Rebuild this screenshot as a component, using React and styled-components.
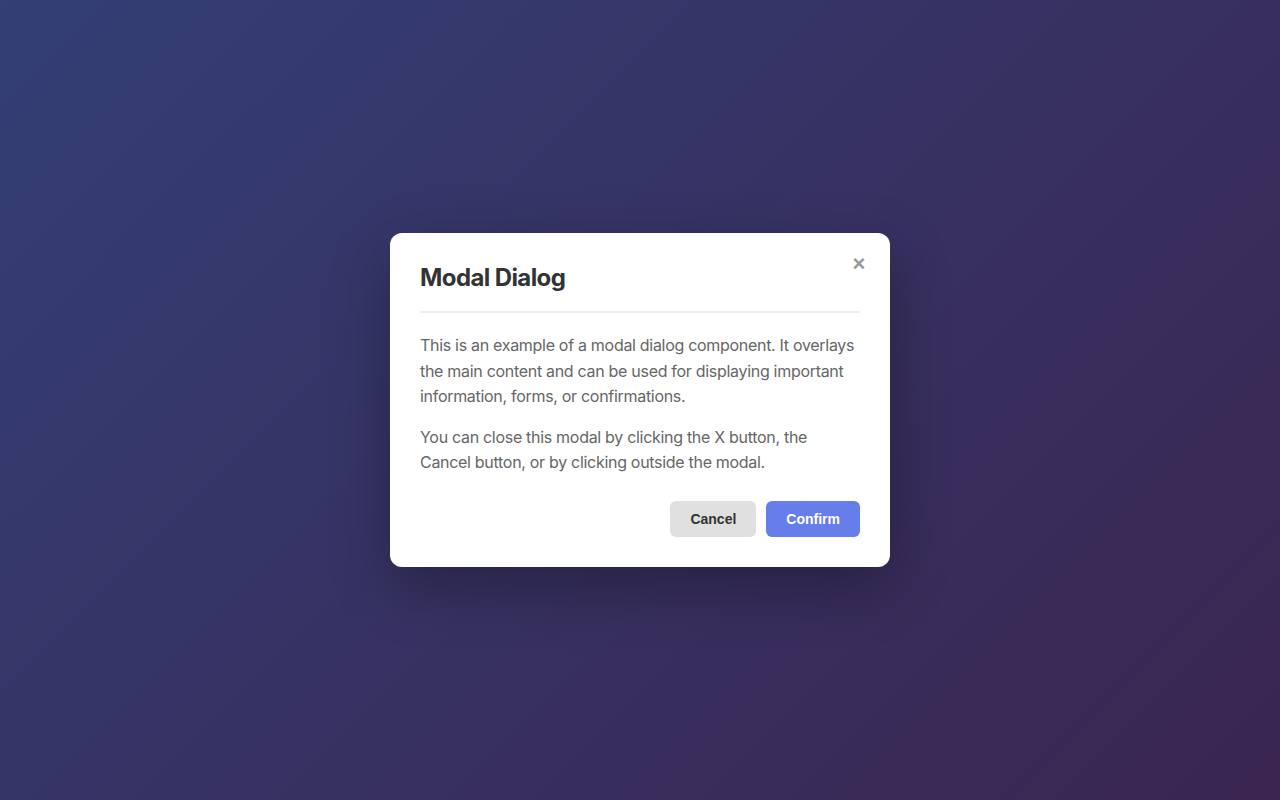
import styled, { createGlobalStyle } from "styled-components";

const GlobalStyle = createGlobalStyle`
  html, body {
    margin: 0;
    padding: 0;
  }
  body {
    font-family: Inter, "Noto Sans", sans-serif;
  }
`;

const Backdrop = styled.div`
  position: relative;
  width: 100vw;
  height: 100vh;
  background: linear-gradient(135deg, #667eea 0%, #764ba2 100%);
  display: flex;
  align-items: center;
  justify-content: center;
  &::before {
    content: "";
    position: absolute;
    inset: 0;
    background: rgba(0, 0, 0, 0.5);
  }
`;

const Modal = styled.div`
  position: relative;
  width: 500px;
  box-sizing: border-box;
  padding: 30px;
  background: #fff;
  border-radius: 12px;
  box-shadow: 0 20px 60px rgba(0, 0, 0, 0.3);
`;

const CloseButton = styled.button`
  position: absolute;
  top: 16px;
  right: 16px;
  width: 30px;
  height: 30px;
  padding: 0;
  border: none;
  background: none;
  color: #999;
  font-family: "Liberation Sans", Arial, sans-serif;
  font-size: 22px;
  font-weight: bold;
  line-height: 30px;
  cursor: pointer;
`;

const Header = styled.div`
  padding-bottom: 19px;
  border-bottom: 2px solid #eee;
`;

const Title = styled.h2`
  margin: 0;
  font-size: 24px;
  font-weight: 700;
  line-height: 29px;
  letter-spacing: -0.6px;
  color: #333;
`;

const Body = styled.div`
  padding-top: 20px;
  color: #666;
`;

const Text = styled.p`
  margin: 0 0 15px;
  font-size: 16px;
  line-height: 1.6;
  letter-spacing: -0.3px;
  &:last-child {
    margin-bottom: 0;
  }
`;

const Footer = styled.div`
  display: flex;
  justify-content: flex-end;
  gap: 10px;
  margin-top: 25px;
`;

const Button = styled.button`
  height: 36px;
  padding: 0 20px;
  border: none;
  border-radius: 6px;
  font-family: "Liberation Sans", Arial, sans-serif;
  font-size: 14px;
  font-weight: bold;
  cursor: pointer;
  background: ${(p) => (p.$primary ? "#667eea" : "#e0e0e0")};
  color: ${(p) => (p.$primary ? "#fff" : "#333")};
`;

export default function App() {
  return (
    <>
      <GlobalStyle />
      <Backdrop>
        <Modal>
          <CloseButton aria-label="Close">×</CloseButton>
          <Header>
            <Title>Modal Dialog</Title>
          </Header>
          <Body>
            <Text>
              This is an example of a modal dialog component. It overlays the
              main content and can be used for displaying important
              information, forms, or confirmations.
            </Text>
            <Text>
              You can close this modal by clicking the X button, the Cancel
              button, or by clicking outside the modal.
            </Text>
          </Body>
          <Footer>
            <Button>Cancel</Button>
            <Button $primary>Confirm</Button>
          </Footer>
        </Modal>
      </Backdrop>
    </>
  );
}
